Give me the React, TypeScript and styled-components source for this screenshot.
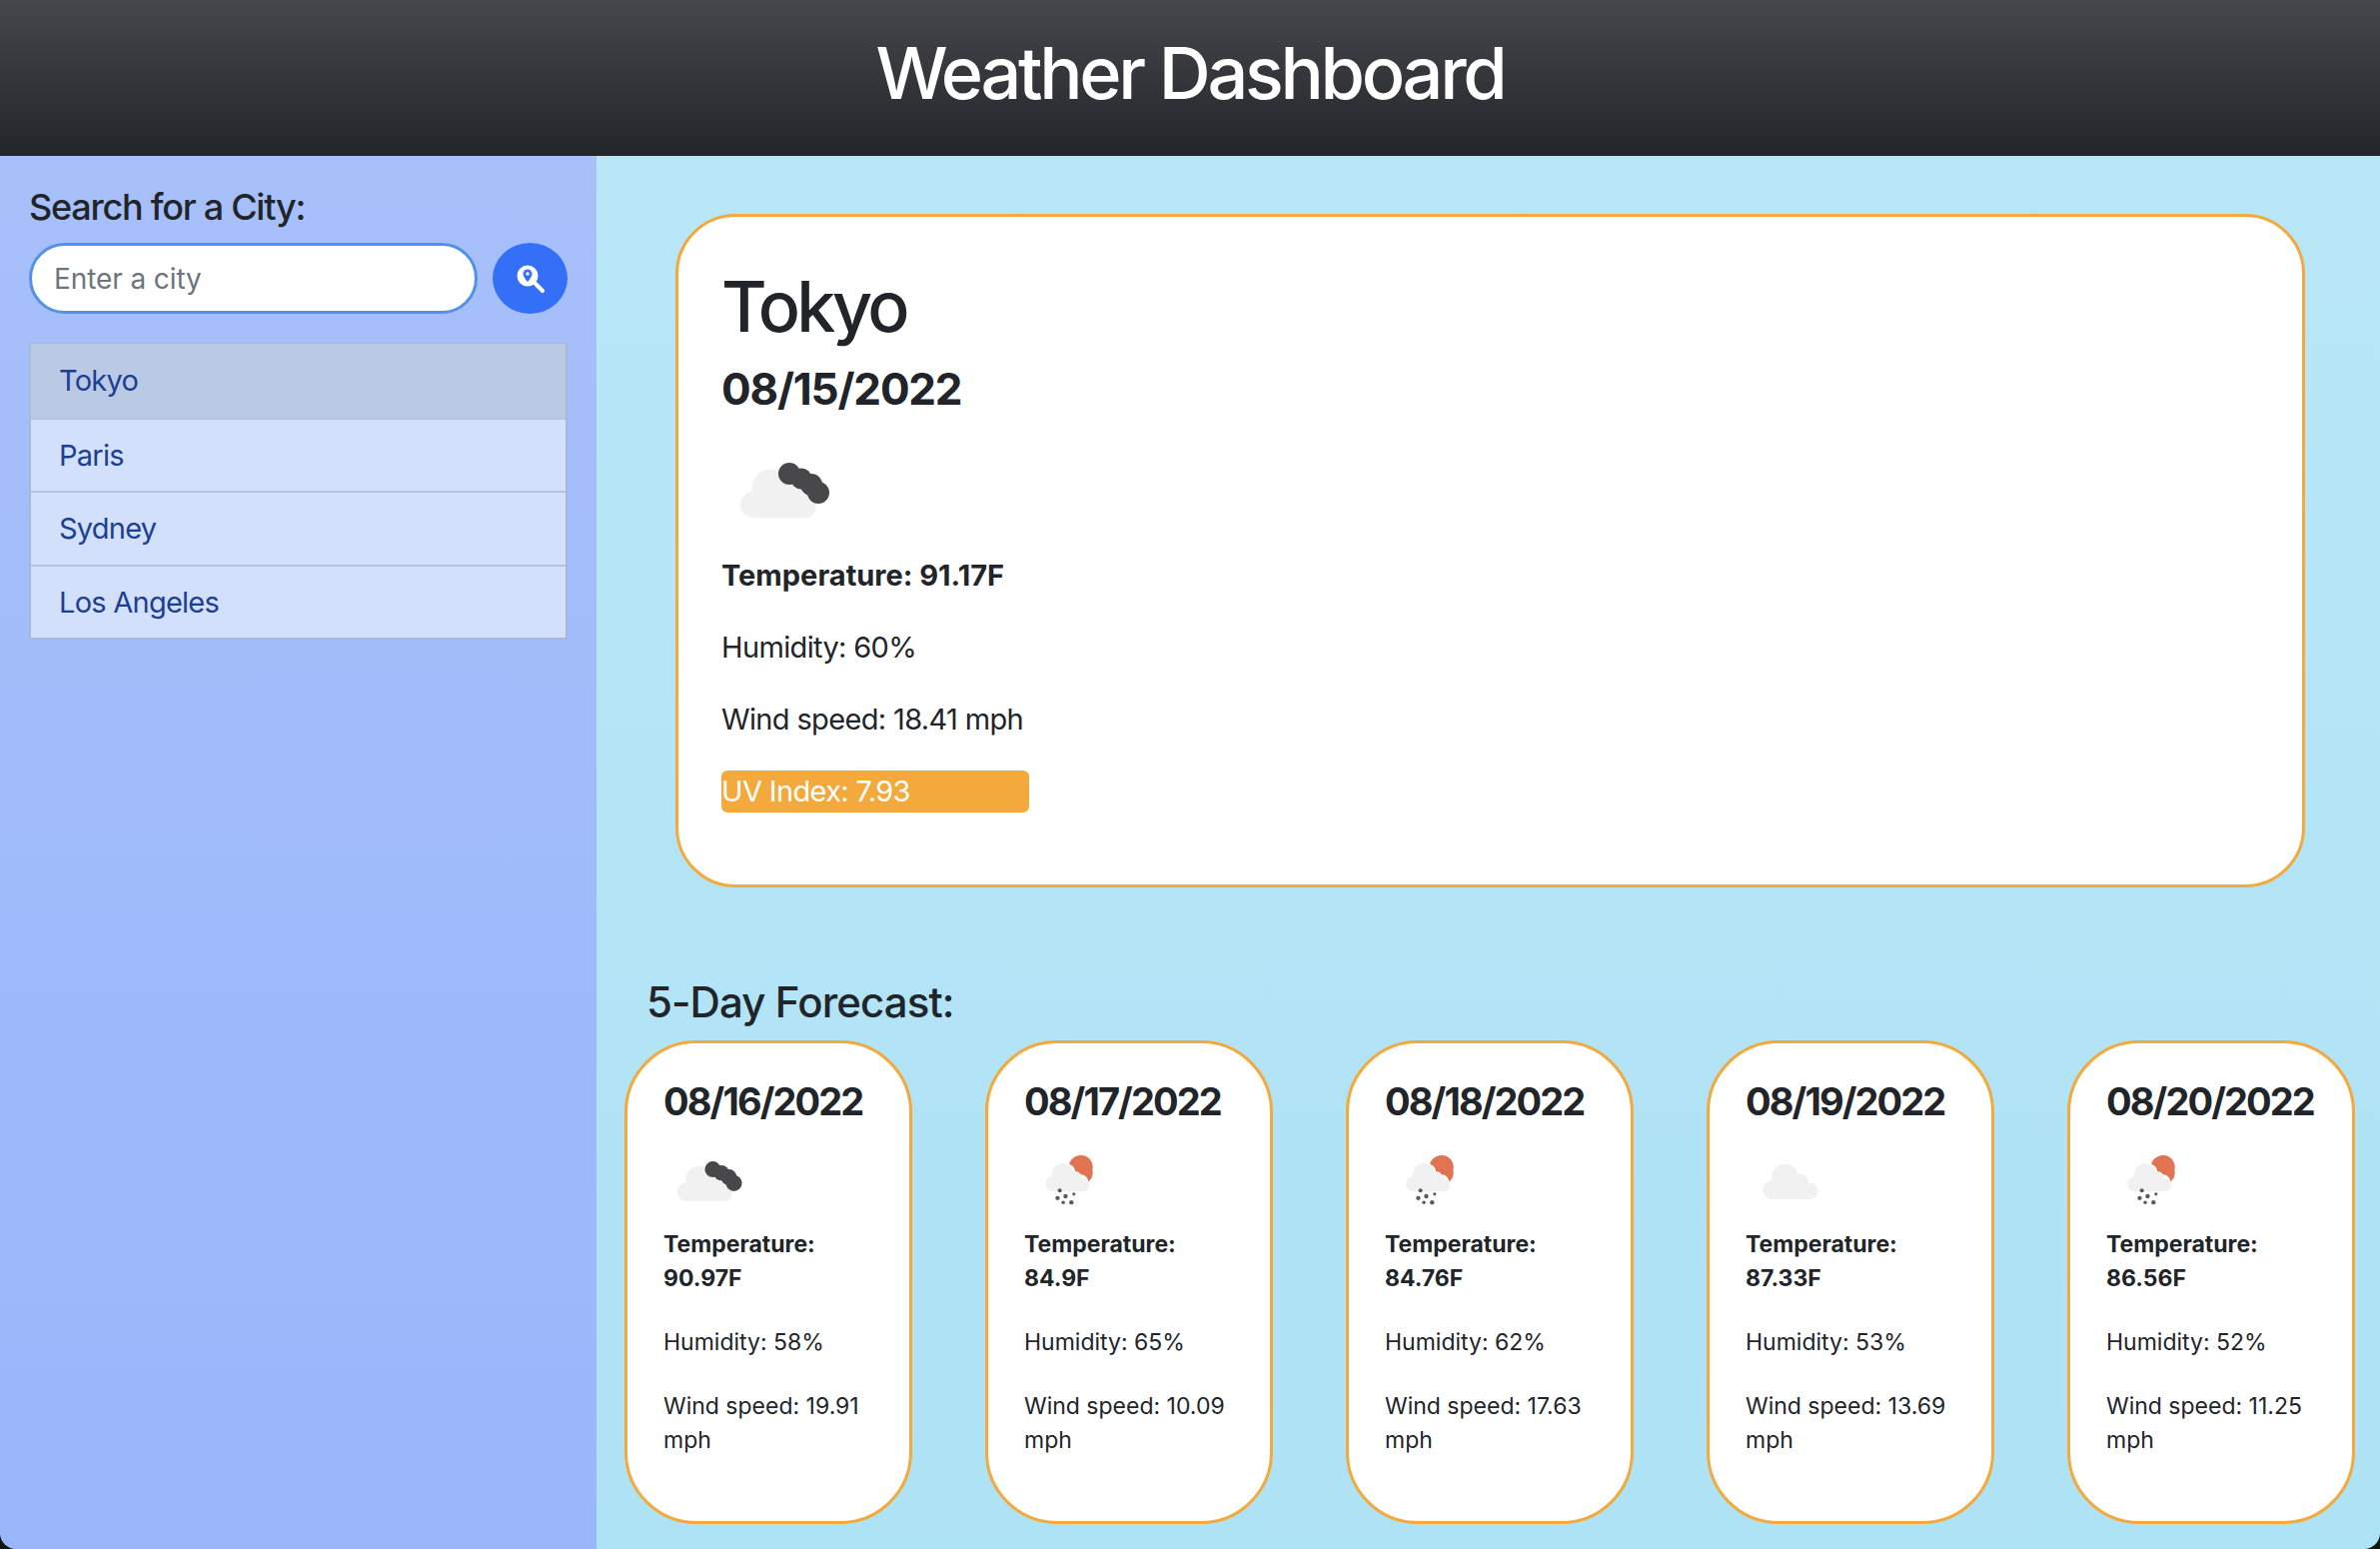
import React from 'react'
import styled, { createGlobalStyle } from 'styled-components'

type IconKind = 'broken' | 'rain' | 'cloud'

const days: { date: string; icon: IconKind; temp: string; humidity: string; wind: string }[] = [
  { date: '08/16/2022', icon: 'broken', temp: '90.97F', humidity: '58%', wind: '19.91' },
  { date: '08/17/2022', icon: 'rain', temp: '84.9F', humidity: '65%', wind: '10.09' },
  { date: '08/18/2022', icon: 'rain', temp: '84.76F', humidity: '62%', wind: '17.63' },
  { date: '08/19/2022', icon: 'cloud', temp: '87.33F', humidity: '53%', wind: '13.69' },
  { date: '08/20/2022', icon: 'rain', temp: '86.56F', humidity: '52%', wind: '11.25' },
]

const cities = ['Tokyo', 'Paris', 'Sydney', 'Los Angeles']

const GlobalStyle = createGlobalStyle`
  html, body {
    margin: 0;
    padding: 0;
    background: #10170c;
  }
  body {
    font-family: Inter, "Liberation Sans", sans-serif;
    color: #212529;
  }
  * {
    box-sizing: border-box;
  }
`

const Page = styled.div`
  width: 2382px;
  height: 1550px;
  display: flex;
  flex-direction: column;
  overflow: hidden;
  border-radius: 0 0 16px 16px;
`

const Header = styled.header`
  height: 156px;
  flex: none;
  display: flex;
  align-items: center;
  justify-content: center;
  background: linear-gradient(180deg, #45474c 0%, #222529 100%);
  color: #fff;
`

const Title = styled.h1`
  margin: 0 0 12px;
  font-size: 72px;
  font-weight: 550;
  letter-spacing: -3.3px;
`

const Body = styled.div`
  flex: 1;
  display: flex;
  min-height: 0;
`

const Sidebar = styled.aside`
  width: 597px;
  flex: none;
  padding: 30px 29px 0 29px;
  background: linear-gradient(180deg, #a7c0fa 0%, #9ab6fb 100%);
`

const SearchLabel = styled.h4`
  margin: 0 0 14px;
  font-size: 36px;
  line-height: 43px;
  font-weight: 550;
  letter-spacing: -1.25px;
`

const SearchRow = styled.form`
  display: flex;
  gap: 15px;
  margin-bottom: 29px;
`

const SearchInput = styled.input`
  width: 449px;
  height: 71px;
  padding: 0 22px;
  border: 3px solid #5590e8;
  border-radius: 36px;
  background: #fff;
  font: 400 28px Inter, sans-serif;
  letter-spacing: -0.1px;
  color: #212529;
  outline: none;
  &::placeholder {
    color: #6c757d;
    opacity: 1;
  }
`

const SearchButton = styled.button`
  width: 76px;
  height: 71px;
  padding: 0;
  border: 0;
  border-radius: 50%;
  background: #3370f7;
  display: flex;
  align-items: center;
  justify-content: center;
`

const CityList = styled.ul`
  list-style: none;
  margin: 0;
  padding: 0;
  border: 2px solid #a9b8d6;
  border-top-width: 1px;
`

const CityItem = styled.li<{ $active?: boolean }>`
  height: 73.5px;
  padding-left: 28px;
  display: flex;
  align-items: center;
  font-size: 29px;
  letter-spacing: -0.75px;
  color: #1c3f94;
  background: ${p => (p.$active ? '#bbcae4' : '#d2e0fb')};
  border-top: ${p => (p.$active ? '0' : '2px solid #b4c3df')};
`

const Main = styled.main`
  flex: 1;
  min-width: 0;
  padding: 58px 26px 0 28px;
  background: linear-gradient(180deg, #b9e7f8 0%, #aee2f5 100%);
`

const CurrentCard = styled.section`
  width: 1631px;
  height: 674px;
  margin-left: 51px;
  padding: 48px 43px 0;
  background: #fff;
  border: 3px solid #f3a93b;
  border-radius: 60px;
`

const CityName = styled.h1`
  margin: 0;
  font-size: 70px;
  line-height: 84px;
  font-weight: 550;
  letter-spacing: -3.6px;
`

const CurrentDate = styled.h3`
  margin: 12px 0 0;
  font-size: 44px;
  line-height: 56px;
  font-weight: 700;
  letter-spacing: -1.2px;
`

const CurrentIcon = styled.div`
  height: 110px;
  margin: 28px 0 3px;
`

const CurrentLine = styled.p<{ $bold?: boolean }>`
  margin: 0 0 36px;
  font-size: 29px;
  line-height: 36px;
  font-weight: ${p => (p.$bold ? 700 : 400)};
  letter-spacing: ${p => (p.$bold ? '0' : '-0.65px')};
`

const UvBar = styled.div`
  width: 308px;
  height: 42px;
  margin-top: -3px;
  border-radius: 6px;
  background: #f3a93b;
  color: #fff;
  font-size: 29px;
  line-height: 42px;
  letter-spacing: -0.65px;
`

const ForecastTitle = styled.h4`
  margin: 90px 0 13px 22px;
  font-size: 42px;
  line-height: 50px;
  font-weight: 500;
  letter-spacing: -0.9px;
`

const ForecastRow = styled.div`
  display: flex;
  gap: 73px;
`

const ForecastCard = styled.article`
  width: 288px;
  height: 484px;
  flex: none;
  padding: 33px 29px 0 36px;
  background: #fff;
  border: 3px solid #f3a93b;
  border-radius: 72px;
`

const ForecastDate = styled.h4`
  margin: 0;
  font-size: 38px;
  line-height: 50px;
  font-weight: 700;
  letter-spacing: -1.9px;
  white-space: nowrap;
`

const ForecastIcon = styled.div`
  height: 77px;
  margin: 22px 0 2px;
`

const ForecastLine = styled.p<{ $bold?: boolean }>`
  margin: 0 0 30px;
  font-size: 23px;
  line-height: 34px;
  font-weight: ${p => (p.$bold ? 700 : 400)};
`

const IconSvg = styled.svg`
  display: block;
  overflow: visible;
  filter: blur(0.5px);
`

// same cloud silhouette for all three icons, shifted per icon
const Cloud = ({ x, y, s }: { x: number; y: number; s: number }) => (
  <path
    transform={`translate(${x} ${y}) scale(${s})`}
    d="M13 48 A13 13 0 0 1 11 22 A17 17 0 0 1 47 14 A12 12 0 0 1 62 26 A11 11 0 0 1 65 48 Z"
    fill="#f1f1f1"
  />
)

const WeatherIcon = ({ kind, size }: { kind: IconKind; size: number }) => (
  <IconSvg width={size} height={size} viewBox="0 0 110 110">
    {kind === 'broken' && (
      <>
        <Cloud x={20} y={25} s={1} />
        <g fill="#48484a">
          <circle cx="68" cy="29" r="11" />
          <circle cx="80" cy="34" r="10.5" />
          <circle cx="90" cy="40" r="11" />
          <circle cx="97" cy="48" r="11" />
        </g>
      </>
    )}
    {kind === 'rain' && (
      <>
        <path
          d="M62 22 a16 16 0 0 1 32 8 a16 16 0 0 1 -6 16 a10 10 0 0 0 -10 -10 a8 8 0 0 0 -8 -4 a10 10 0 0 0 -8 -10 z"
          fill="#e07350"
        />
        <Cloud x={30} y={21} s={0.8} />
        <g fill="#5a5a5c">
          <circle cx="49" cy="58" r="2.8" />
          <circle cx="46" cy="68.5" r="3" />
          <circle cx="57" cy="66" r="3" />
          <circle cx="68.5" cy="63" r="2.2" />
          <circle cx="53.7" cy="74.5" r="2.4" />
          <circle cx="65" cy="74.5" r="3" />
        </g>
      </>
    )}
    {kind === 'cloud' && <Cloud x={25} y={22} s={1} />}
  </IconSvg>
)

const App = () => (
  <Page>
    <GlobalStyle />
    <Header>
      <Title>Weather Dashboard</Title>
    </Header>
    <Body>
      <Sidebar>
        <SearchLabel>Search for a City:</SearchLabel>
        <SearchRow>
          <SearchInput placeholder="Enter a city" />
          <SearchButton type="button" aria-label="Search">
            <svg width="30" height="30" viewBox="0 0 30 30">
              <path
                d="M12 1.5 a10.5 10.5 0 1 0 0 21 a10.5 10.5 0 0 0 0 -21 z"
                fill="#fff"
              />
              <path d="M19 19 L27 27" stroke="#fff" strokeWidth="4" strokeLinecap="round" />
              <path
                d="M12 5.5 a4.5 4.5 0 0 0 -4.5 4.5 c0 3 4.5 8 4.5 8 s4.5 -5 4.5 -8 a4.5 4.5 0 0 0 -4.5 -4.5 z"
                fill="#3370f7"
              />
              <circle cx="12" cy="10" r="1.7" fill="#fff" />
            </svg>
          </SearchButton>
        </SearchRow>
        <CityList>
          {cities.map((c, i) => (
            <CityItem key={c} $active={i === 0}>
              {c}
            </CityItem>
          ))}
        </CityList>
      </Sidebar>
      <Main>
        <CurrentCard>
          <CityName>Tokyo</CityName>
          <CurrentDate>08/15/2022</CurrentDate>
          <CurrentIcon>
            <WeatherIcon kind="broken" size={110} />
          </CurrentIcon>
          <CurrentLine $bold>Temperature: 91.17F</CurrentLine>
          <CurrentLine>Humidity: 60%</CurrentLine>
          <CurrentLine>Wind speed: 18.41 mph</CurrentLine>
          <UvBar>UV Index: 7.93</UvBar>
        </CurrentCard>
        <ForecastTitle>5-Day Forecast:</ForecastTitle>
        <ForecastRow>
          {days.map(d => (
            <ForecastCard key={d.date}>
              <ForecastDate>{d.date}</ForecastDate>
              <ForecastIcon>
                <WeatherIcon kind={d.icon} size={80} />
              </ForecastIcon>
              <ForecastLine $bold>Temperature: {d.temp}</ForecastLine>
              <ForecastLine>Humidity: {d.humidity}</ForecastLine>
              <ForecastLine>Wind speed: {d.wind} mph</ForecastLine>
            </ForecastCard>
          ))}
        </ForecastRow>
      </Main>
    </Body>
  </Page>
)

export default App
